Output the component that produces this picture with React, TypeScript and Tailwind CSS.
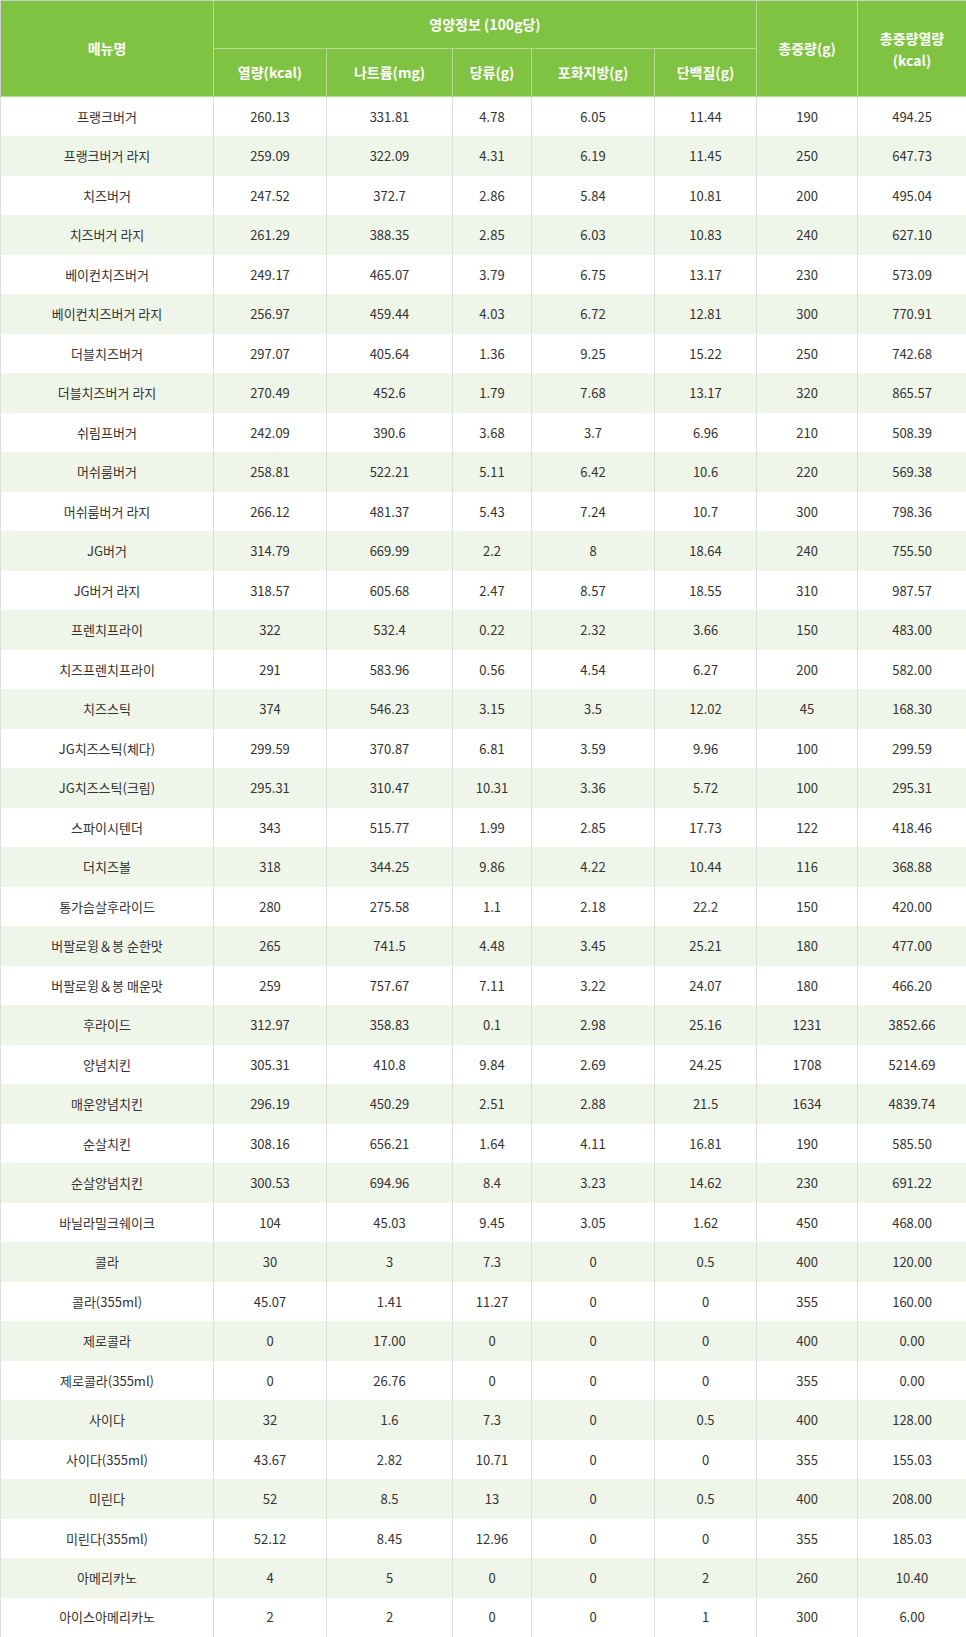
import React from "react";

const rows: [string, string, string, string, string, string, string, string][] = [
  ["프랭크버거", "260.13", "331.81", "4.78", "6.05", "11.44", "190", "494.25"],
  ["프랭크버거 라지", "259.09", "322.09", "4.31", "6.19", "11.45", "250", "647.73"],
  ["치즈버거", "247.52", "372.7", "2.86", "5.84", "10.81", "200", "495.04"],
  ["치즈버거 라지", "261.29", "388.35", "2.85", "6.03", "10.83", "240", "627.10"],
  ["베이컨치즈버거", "249.17", "465.07", "3.79", "6.75", "13.17", "230", "573.09"],
  ["베이컨치즈버거 라지", "256.97", "459.44", "4.03", "6.72", "12.81", "300", "770.91"],
  ["더블치즈버거", "297.07", "405.64", "1.36", "9.25", "15.22", "250", "742.68"],
  ["더블치즈버거 라지", "270.49", "452.6", "1.79", "7.68", "13.17", "320", "865.57"],
  ["쉬림프버거", "242.09", "390.6", "3.68", "3.7", "6.96", "210", "508.39"],
  ["머쉬룸버거", "258.81", "522.21", "5.11", "6.42", "10.6", "220", "569.38"],
  ["머쉬룸버거 라지", "266.12", "481.37", "5.43", "7.24", "10.7", "300", "798.36"],
  ["JG버거", "314.79", "669.99", "2.2", "8", "18.64", "240", "755.50"],
  ["JG버거 라지", "318.57", "605.68", "2.47", "8.57", "18.55", "310", "987.57"],
  ["프렌치프라이", "322", "532.4", "0.22", "2.32", "3.66", "150", "483.00"],
  ["치즈프렌치프라이", "291", "583.96", "0.56", "4.54", "6.27", "200", "582.00"],
  ["치즈스틱", "374", "546.23", "3.15", "3.5", "12.02", "45", "168.30"],
  ["JG치즈스틱(체다)", "299.59", "370.87", "6.81", "3.59", "9.96", "100", "299.59"],
  ["JG치즈스틱(크림)", "295.31", "310.47", "10.31", "3.36", "5.72", "100", "295.31"],
  ["스파이시텐더", "343", "515.77", "1.99", "2.85", "17.73", "122", "418.46"],
  ["더치즈볼", "318", "344.25", "9.86", "4.22", "10.44", "116", "368.88"],
  ["통가슴살후라이드", "280", "275.58", "1.1", "2.18", "22.2", "150", "420.00"],
  ["버팔로윙＆봉 순한맛", "265", "741.5", "4.48", "3.45", "25.21", "180", "477.00"],
  ["버팔로윙＆봉 매운맛", "259", "757.67", "7.11", "3.22", "24.07", "180", "466.20"],
  ["후라이드", "312.97", "358.83", "0.1", "2.98", "25.16", "1231", "3852.66"],
  ["양념치킨", "305.31", "410.8", "9.84", "2.69", "24.25", "1708", "5214.69"],
  ["매운양념치킨", "296.19", "450.29", "2.51", "2.88", "21.5", "1634", "4839.74"],
  ["순살치킨", "308.16", "656.21", "1.64", "4.11", "16.81", "190", "585.50"],
  ["순살양념치킨", "300.53", "694.96", "8.4", "3.23", "14.62", "230", "691.22"],
  ["바닐라밀크쉐이크", "104", "45.03", "9.45", "3.05", "1.62", "450", "468.00"],
  ["콜라", "30", "3", "7.3", "0", "0.5", "400", "120.00"],
  ["콜라(355ml)", "45.07", "1.41", "11.27", "0", "0", "355", "160.00"],
  ["제로콜라", "0", "17.00", "0", "0", "0", "400", "0.00"],
  ["제로콜라(355ml)", "0", "26.76", "0", "0", "0", "355", "0.00"],
  ["사이다", "32", "1.6", "7.3", "0", "0.5", "400", "128.00"],
  ["사이다(355ml)", "43.67", "2.82", "10.71", "0", "0", "355", "155.03"],
  ["미린다", "52", "8.5", "13", "0", "0.5", "400", "208.00"],
  ["미린다(355ml)", "52.12", "8.45", "12.96", "0", "0", "355", "185.03"],
  ["아메리카노", "4", "5", "0", "0", "2", "260", "10.40"],
  ["아이스아메리카노", "2", "2", "0", "0", "1", "300", "6.00"],
];

const th =
  "bg-[#80c241] text-white font-bold text-[14px] text-center align-middle border border-[#b5da8f] p-0";

export default function App() {
  return (
    <div
      className="w-[966px] bg-white"
      style={{ fontFamily: '"Noto Sans CJK KR", "Noto Sans", sans-serif' }}
    >
      <table className="w-[966px] table-fixed border-collapse border border-[#cfcfcf]">
        <colgroup>
          <col className="w-[213px]" />
          <col className="w-[113px]" />
          <col className="w-[126px]" />
          <col className="w-[79px]" />
          <col className="w-[123px]" />
          <col className="w-[102px]" />
          <col className="w-[101px]" />
          <col className="w-[109px]" />
        </colgroup>
        <thead>
          <tr className="h-[48px]">
            <th rowSpan={2} className={`${th} border-t-[#cfcfcf] border-l-[#cfcfcf]`}>
              메뉴명
            </th>
            <th colSpan={5} className={`${th} border-t-[#cfcfcf]`}>
              영양정보 (100g당)
            </th>
            <th rowSpan={2} className={`${th} border-t-[#cfcfcf]`}>
              총중량(g)
            </th>
            <th rowSpan={2} className={`${th} border-t-[#cfcfcf] border-r-[#cfcfcf] leading-[22px]`}>
              총중량열량
              <br />
              (kcal)
            </th>
          </tr>
          <tr className="h-[48px]">
            <th className={th}>열량(kcal)</th>
            <th className={th}>나트륨(mg)</th>
            <th className={th}>당류(g)</th>
            <th className={th}>포화지방(g)</th>
            <th className={th}>단백질(g)</th>
          </tr>
        </thead>
        <tbody>
          {rows.map((r, i) => (
            <tr
              key={i}
              className={`h-[39.5px] ${i % 2 === 1 ? "bg-[#f0f5ea]" : "bg-white"}`}
            >
              {r.map((c, j) => (
                <td
                  key={j}
                  className="p-0 text-center align-middle text-[13px] text-[#333333] border-x border-x-[#dedede] border-y-0"
                >
                  {c}
                </td>
              ))}
            </tr>
          ))}
        </tbody>
      </table>
    </div>
  );
}
